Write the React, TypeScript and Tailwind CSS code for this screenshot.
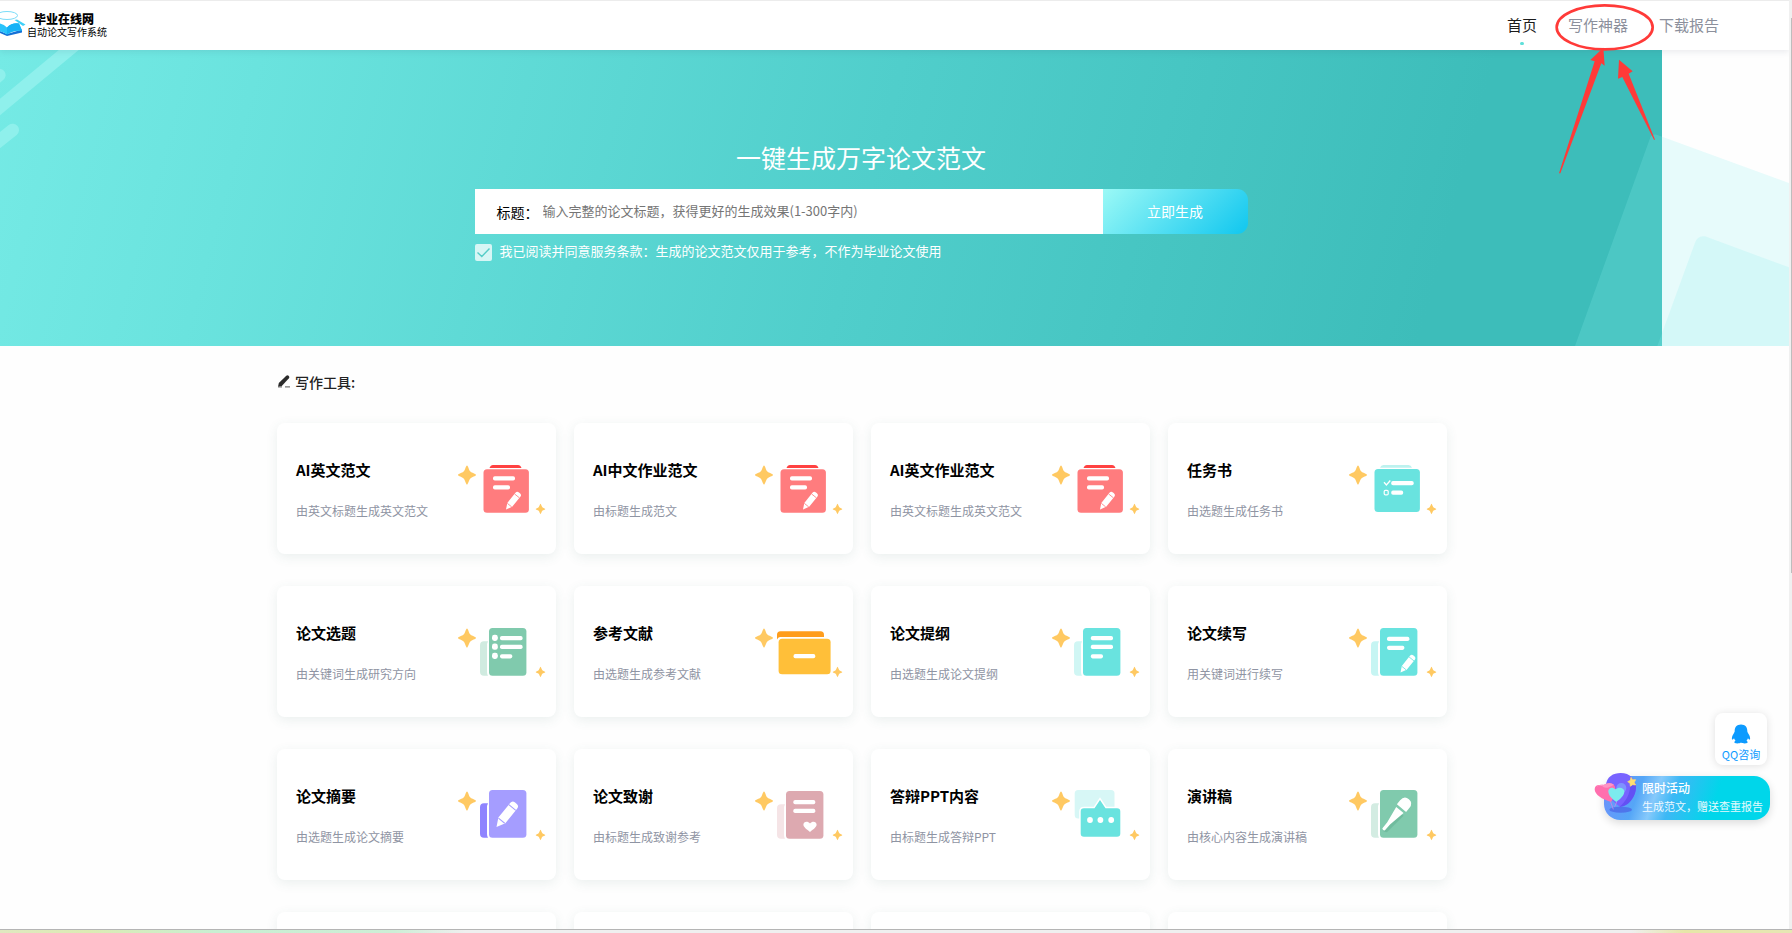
import { ReactNode } from "react";

type Tool = { title: string; desc: string; icon: ReactNode };

const STAR = "M0 -9.5C1 -9.5 2 -4.6 3.4 -3.4C4.6 -2.2 9 -1 9 0C9 1 4.6 2.2 3.4 3.4C2 4.6 1 9.5 0 9.5C-1 9.5 -2 4.6 -3.4 3.4C-4.6 2.2 -9 1 -9 0C-9 -1 -4.6 -2.2 -3.4 -3.4C-2 -4.6 -1 -9.5 0 -9.5Z";

function IconFrame({ children }: { children: ReactNode }) {
  return (
    <svg viewBox="0 0 90 56" className="mt-[3px] h-14 w-[90px] shrink-0" aria-hidden="true">
      <path d={STAR} transform="translate(11 12)" fill="#ffc962" />
      <path d={STAR} transform="translate(84.5 46) scale(.54)" fill="#ffc962" />
      {children}
    </svg>
  );
}

function Bar({ x, y, w }: { x: number; y: number; w: number }) {
  return <rect x={x} y={y} width={w} height="4.2" rx="1.8" fill="#fff" />;
}

// points down-left, tip at 0,0
function Pencil({ x, y, s = 1, cut }: { x: number; y: number; s?: number; cut: string }) {
  return (
    <g transform={`translate(${x} ${y}) rotate(39) scale(${s})`}>
      <path d="M0 0L-2.9 -5.5V-17.5Q-2.9 -19.8 -0.6 -19.8H0.6Q2.9 -19.8 2.9 -17.5V-5.5Z" fill="#fff" />
      <path d="M-2.9 -16.2H2.9M-2.6 -5.2H2.6" stroke={cut} strokeWidth=".7" />
    </g>
  );
}

function Book({ front, back, y = 2, children }: { front: string; back: string; y?: number; children: ReactNode }) {
  return (
    <>
      <path
        d={`M32 ${y + 13.3}H28Q24 ${y + 13.3} 24 ${y + 17.3}V${y + 43.7}Q24 ${y + 47.7} 28 ${y + 47.7}H32Q31 ${y + 46} 31 ${y + 44}V${y + 16}Z`}
        fill={back}
      />
      <rect x="33" y={y} width="37.4" height="47.7" rx="3.5" fill={front} />
      {children}
    </>
  );
}

function RedNote() {
  return (
    <IconFrame>
      <path d="M33.5 5Q34.5 2 37 2H62Q64.5 2 65.5 5Z" fill="#ff4141" />
      <rect x="27.5" y="6.3" width="45.4" height="43.4" rx="3.5" fill="#ff7c7e" />
      <Bar x={37} y={13.3} w={22} />
      <Bar x={37} y={22.3} w={17} />
      <Pencil x={50} y={46.5} s={1.08} cut="#ff7c7e" />
    </IconFrame>
  );
}

function TaskNote() {
  return (
    <IconFrame>
      <path d="M33 4.8Q34 2 36.5 2H61.5Q64 2 65 4.8Z" fill="#bdf2ef" />
      <rect x="27.5" y="6" width="45.4" height="43" rx="3.5" fill="#69e3df" />
      <path d="M37 19.3L39.4 22L43.3 17.5" fill="none" stroke="#fff" strokeWidth="1.3" />
      <rect x="37.2" y="27.3" width="4" height="4.6" rx="1.2" fill="none" stroke="#fff" strokeWidth="1.2" />
      <Bar x={44.2} y={18} w={22.5} />
      <Bar x={44.2} y={27.6} w={12} />
    </IconFrame>
  );
}

const tools: Tool[] = [
  { title: "AI英文范文", desc: "由英文标题生成英文范文", icon: <RedNote /> },
  { title: "AI中文作业范文", desc: "由标题生成范文", icon: <RedNote /> },
  { title: "AI英文作业范文", desc: "由英文标题生成英文范文", icon: <RedNote /> },
  { title: "任务书", desc: "由选题生成任务书", icon: <TaskNote /> },
  {
    title: "论文选题",
    desc: "由关键词生成研究方向",
    icon: (
      <IconFrame>
        <Book front="#80caad" back="#d0ebe0">
          {[8.8, 17.6, 26.8].map((y) => (
            <rect key={y} x="36" y={y} width="5.8" height="6.2" rx="2.4" fill="#fff" />
          ))}
          <Bar x={44} y={10} w={22.6} />
          <Bar x={44} y={18.8} w={22.6} />
          <Bar x={44} y={28.2} w={12.3} />
        </Book>
      </IconFrame>
    ),
  },
  {
    title: "参考文献",
    desc: "由选题生成参考文献",
    icon: (
      <IconFrame>
        <path d="M24 13.5V9Q24 5.3 27.5 5.3H67.5Q71 5.3 71 9V11H27Q25 11 24 13.5Z" fill="#ff9d1c" />
        <rect x="25.6" y="12.7" width="52" height="35.6" rx="3.5" fill="#ffbf39" />
        <Bar x={40.5} y={28.1} w={21.8} />
      </IconFrame>
    ),
  },
  {
    title: "论文提纲",
    desc: "由选题生成论文提纲",
    icon: (
      <IconFrame>
        <Book front="#69e3df" back="#d0f6f4">
          <Bar x={40.8} y={10} w={22.2} />
          <Bar x={40.8} y={18.8} w={22.2} />
          <Bar x={40.8} y={28.2} w={12.2} />
        </Book>
      </IconFrame>
    ),
  },
  {
    title: "论文续写",
    desc: "用关键词进行续写",
    icon: (
      <IconFrame>
        <Book front="#69e3df" back="#c6f5f3">
          <Bar x={40} y={10.8} w={22.4} />
          <Bar x={40} y={19.7} w={17.4} />
          <Pencil x={53.5} y={46.5} s={1.08} cut="#69e3df" />
        </Book>
      </IconFrame>
    ),
  },
  {
    title: "论文摘要",
    desc: "由选题生成论文摘要",
    icon: (
      <IconFrame>
        <Book front="#a59dff" back="#8f84ff" y={1}>
          <Pencil x={40.5} y={38} s={1.55} cut="#a59dff" />
        </Book>
      </IconFrame>
    ),
  },
  {
    title: "论文致谢",
    desc: "由标题生成致谢参考",
    icon: (
      <IconFrame>
        <Book front="#dda9b0" back="#f5e4e6">
          <Bar x={40.3} y={11} w={22} />
          <Bar x={40.3} y={19.8} w={22} />
          <path d="M57 43C53 40 50.4 38 50.4 35.6C50.4 32.4 54.8 31.4 57 34.6C59.2 31.4 63.6 32.4 63.6 35.6C63.6 38 61 40 57 43Z" fill="#fff" />
        </Book>
      </IconFrame>
    ),
  },
  {
    title: "答辩PPT内容",
    desc: "由标题生成答辩PPT",
    icon: (
      <IconFrame>
        <rect x="24.7" y="1" width="39.8" height="28.4" rx="3.5" fill="#d7f7f6" />
        <path
          d="M34 19.3H44.5L50 11L55.5 19.3H67Q70.3 19.3 70.3 22.6V44.4Q70.3 47.7 67 47.7H34Q30.7 47.7 30.7 44.4V22.6Q30.7 19.3 34 19.3Z"
          fill="#69e3df"
          stroke="#fff"
          strokeWidth="3"
          paintOrder="stroke"
        />
        {[40, 50.4, 61.2].map((cx) => (
          <circle key={cx} cx={cx} cy="31" r="2.9" fill="#fff" />
        ))}
      </IconFrame>
    ),
  },
  {
    title: "演讲稿",
    desc: "由核心内容生成演讲稿",
    icon: (
      <IconFrame>
        <Book front="#80caad" back="#d3ece2" y={1}>
          <g transform="translate(36.5 40.5) rotate(40)">
            <path d="M1.2 1.5L-3 -23.5H6.5L4.4 0Z" fill="#5fae90" opacity=".5" />
            <path d="M-1.6 0L-1.8 -8L-4.8 -25.5H4.8L1.8 -8L1.6 0Q0 1.2 -1.6 0Z" fill="#fff" />
            <path d="M-6 -28H6V-33Q6 -39.5 0 -39.5Q-6 -39.5 -6 -33Z" fill="#fff" />
          </g>
        </Book>
      </IconFrame>
    ),
  },
];

function ToolCard({ tool }: { tool: Tool }) {
  return (
    <a
      href="#"
      className="flex items-start justify-between rounded-lg bg-white pt-[37px] pr-[10px] pb-[33px] pl-[19px] shadow-[0_3px_12px_rgba(60,110,100,0.1)]"
    >
      <div className="whitespace-nowrap">
        <h3 className="text-[15px] leading-5 font-bold text-black">{tool.title}</h3>
        <p className="mt-[21px] text-xs leading-5 text-[#8f94a3]">{tool.desc}</p>
      </div>
      {tool.icon}
    </a>
  );
}

function Header() {
  return (
    <header className="relative z-10 flex h-[50px] items-center justify-between border-t border-[#ececec] bg-white pr-[70px] pb-[2px] shadow-[0_2px_6px_rgba(60,70,100,0.1)]">
      <a href="#" className="flex items-center">
        <svg viewBox="0 0 27 28" className="h-7 w-[27px]" aria-hidden="true">
          <path d="M-2 21L7 25L22 21.5V18.5L7 23L-2 19Z" fill="#1471d6" />
          <path d="M-4 12Q3 12 7 16.5Q12 11.5 19 12.5L22 19.5Q13 19 7 23.5Q2 20 -4 19.5Z" fill="#29c3fb" />
          <path d="M7 16.5V23.5Q13 19 22 19.5L19 12.5Q12 11.5 7 16.5Z" fill="#16b2f6" />
          <path d="M14.5 9L17 8.6L25.5 13.5L23 15Z" fill="#3fd0f8" />
          <ellipse cx="7" cy="4.5" rx="10.5" ry="4" fill="#fff" stroke="#7bdcf8" />
        </svg>
        <div className="flex flex-col whitespace-nowrap text-black">
          <span className="pl-[7px] text-xs leading-[14px] font-black">毕业在线网</span>
          <span className="text-[10px] leading-3">自动论文写作系统</span>
        </div>
      </a>
      <nav className="flex gap-[31px] text-[15px] leading-5 text-[#8c909c]">
        <a href="#" className="relative text-[#1c1c1c]">
          首页
          <span className="absolute top-[27px] left-1/2 h-[3px] w-1 -translate-x-1/2 rounded-full bg-[#5fe0da]" />
        </a>
        <a href="#">写作神器</a>
        <a href="#">下载报告</a>
      </nav>
    </header>
  );
}

function Hero() {
  return (
    <section className="relative pt-[87px] pr-[67px] pb-[85px]">
      <div className="absolute inset-y-0 right-[127px] left-0 bg-[linear-gradient(105deg,#75eae5_0%,#6ae3de_15%,#50cecb_52%,#3dbdba_86%)]" />
      <svg viewBox="0 150 240 300" className="absolute top-0 left-0 h-[100px] w-20" aria-hidden="true">
        <g fill="none" stroke="#8ff0ec">
          <path d="M-40 354L240 122" strokeWidth="38" />
          <path d="M-40 453L38 390" strokeWidth="38" strokeLinecap="round" />
          <path d="M-40 257L-2 225" strokeWidth="38" strokeLinecap="round" />
        </g>
      </svg>
      <svg viewBox="270 390 657 648" className="absolute right-0 bottom-0 h-[216px] w-[219px]" aria-hidden="true">
        <path d="M285 1038L510 415Q514 402 530 404L927 549V1038Z" fill="#8cf0f0" fillOpacity=".2" />
        <path d="M532 1038L645 728Q653 705 675 709L927 802V1038Z" fill="#8cf0f0" fillOpacity=".2" />
      </svg>
      <div className="relative mx-auto max-w-[773px]">
        <h1 className="text-center text-[25px] leading-10 text-white">一键生成万字论文范文</h1>
        <form className="mt-3" onSubmit={(e) => e.preventDefault()}>
          <div className="flex h-[45px]">
            <div className="flex flex-1 items-center bg-white pl-[22px] text-sm">
              <label htmlFor="title" className="text-black">
                标题：
              </label>
              <input
                id="title"
                type="text"
                placeholder="输入完整的论文标题，获得更好的生成效果(1-300字内)"
                className="ml-1 flex-1 text-[13px] outline-none placeholder:text-[#757575]"
              />
            </div>
            <button
              type="submit"
              className="w-[145px] rounded-r-[11px] bg-[linear-gradient(135deg,#9bf9f6_0%,#17c9ef_95%)] pb-[2px] text-sm text-white"
            >
              立即生成
            </button>
          </div>
          <label className="mt-2 flex items-start text-[13px] leading-[18px] text-white">
            <span className="mt-px mr-[7px] grid size-[18px] place-items-center">
              <input
                type="checkbox"
                defaultChecked
                className="col-start-1 row-start-1 size-[17px] appearance-none rounded-xs bg-white/75"
              />
              <svg viewBox="0 0 17 17" className="pointer-events-none col-start-1 row-start-1 size-[17px]" aria-hidden="true">
                <path d="M2.5 8.5L6.8 12.5L14.5 4.5" fill="none" stroke="#56cdc8" strokeWidth="1.4" />
              </svg>
            </span>
            我已阅读并同意服务条款：生成的论文范文仅用于参考，不作为毕业论文使用
          </label>
        </form>
      </div>
    </section>
  );
}

function Tools() {
  return (
    <section className="pt-[26px] pr-[65px]">
      <div className="mx-auto max-w-[1170px]">
        <h2 className="flex items-center gap-1 text-sm leading-5 font-medium text-[#222]">
          <svg viewBox="0 0 14 14" className="size-[14px]" aria-hidden="true">
            <path d="M1 12L1.8 8.1L9.3 .7Q10.4 -.2 11.6 .8Q12.8 2 11.9 3.2L4.8 10.9Z" fill="#2b2b2b" />
            <path d="M1 11.9H5M8 11.9H13" stroke="#777" strokeWidth="1.1" />
          </svg>
          写作工具:
        </h2>
        <div className="mt-[31px] grid grid-cols-4 gap-x-[18px] gap-y-8">
          {tools.map((t) => (
            <ToolCard key={t.title} tool={t} />
          ))}
          {[0, 1, 2, 3].map((n) => (
            <div key={n} className="h-[131px] rounded-lg bg-white shadow-[0_3px_12px_rgba(60,110,100,0.1)]" />
          ))}
        </div>
      </div>
    </section>
  );
}

function FloatingPanel() {
  return (
    <div className="absolute right-[22px] bottom-[113px] z-20 flex flex-col items-end gap-[11px]">
      <a
        href="#"
        className="mr-[3px] flex size-[52px] flex-col items-center rounded-lg bg-white pt-[11px] text-[11px] leading-5 text-[#0d9bff] shadow-[0_1px_8px_rgba(0,0,0,0.12)]"
      >
        <svg viewBox="0 0 20 20" className="size-5 shrink-0" aria-hidden="true">
          <path
            d="M10 .5C5.8 .5 3.6 3.3 3.7 7C3.7 8 3.2 8.6 2.6 9.8C1.2 12 .6 14 1 15.4C1.5 16 2.4 15 3 14.2C3.3 15.2 3.8 16 4.5 16.7C3.3 17.2 3.2 18.2 3.7 19C5.5 19.8 8.5 19.6 10 18.6C11.5 19.6 14.5 19.8 16.3 19C16.8 18.2 16.7 17.2 15.5 16.7C16.2 16 16.7 15.2 17 14.2C17.6 15 18.5 16 19 15.4C19.4 14 18.8 12 17.4 9.8C16.8 8.6 16.3 8 16.3 7C16.4 3.3 14.2 .5 10 .5Z"
            fill="#0d9bff"
          />
        </svg>
        QQ咨询
      </a>
      <a
        href="#"
        className="relative rounded-2xl bg-[linear-gradient(110deg,#6f8ffb_0%,#55a6f7_22%,#86c9fb_32%,#3db8f5_42%,#00d6ea_66%)] pt-[3px] pr-[7px] pb-1 pl-9 whitespace-nowrap text-white shadow-[0_3px_8px_rgba(0,0,0,0.14)]"
      >
        <svg viewBox="0 0 132 126" className="absolute -top-1 -left-[10px] h-[42px] w-11" aria-hidden="true">
          <ellipse cx="80" cy="113" rx="34" ry="9" fill="#4a62e6" opacity=".7" />
          <path d="M78 104C50 86 34 62 36 40C38 14 58 3 80 3C108 3 126 22 126 46C126 72 104 102 78 104Z" fill="#7863ff" />
          <path d="M124 32C134 68 102 108 76 104C96 90 110 62 108 38Z" fill="#6351f4" />
          <circle cx="82" cy="48" r="15" fill="#7f92ff" />
          <path d="M51 90C24 82 2 68 2 52C2 38 16 36 26 42C32 34 54 28 62 42C68 56 60 76 51 90Z" fill="#ff6fae" />
          <path d="M8 46Q18 36 28 45Q38 52 60 38Q48 28 30 38Q14 36 8 46Z" fill="#ff93c4" />
          <path d="M50 90L58 112M68 90L62 104" stroke="#c787e8" strokeWidth="2.5" fill="none" />
          <path d="M67 90C50 78 42 66 43 56C45 46 57 44 64 52C74 44 90 46 91 58C92 70 78 82 67 90Z" fill="#7cebee" />
          <path d="M111 16L116 23L125 23L121 31L125 39L116 38L109 43L108 34L101 29L109 25Z" fill="#ffe070" stroke="#ffe070" strokeWidth="2" strokeLinejoin="round" />
        </svg>
        <span className="block pl-[2px] text-xs leading-[18px] font-medium">限时活动</span>
        <span className="block pl-[2px] text-[11px] leading-[19px] text-white/90">生成范文，赠送查重报告</span>
      </a>
    </div>
  );
}

function Markup() {
  return (
    <svg viewBox="0 0 936 1080" className="pointer-events-none absolute top-0 right-0 z-30 h-[360px] w-[312px]" aria-hidden="true">
      <ellipse cx="374" cy="82" rx="144" ry="66" fill="none" stroke="#ff3a38" strokeWidth="8" />
      <path d="M370 143L331 180L344 184L237 520H241L364 190L374 197Z" fill="#ff3a38" />
      <path d="M417 179L458 214L446 221L525 419H522L427 231L414 236Z" fill="#ff3a38" />
    </svg>
  );
}

export default function App() {
  return (
    <div className="relative flex h-screen flex-col overflow-hidden bg-[#fefefe] font-['Noto_Sans_CJK_SC','Noto_Sans',sans-serif]">
      <div className="flex min-h-0 flex-1">
        <main className="min-w-0 flex-1 overflow-hidden">
          <Header />
          <Hero />
          <Tools />
        </main>
        <div className="w-[3px] bg-[#f0f0f0] pt-[18px]">
          <div className="ml-auto h-[555px] w-px bg-[#bdbdbd]" />
        </div>
      </div>
      <div className="h-1 shrink-0 border-t border-[#b5b5b5] bg-[linear-gradient(90deg,#e0e8c0_0%,#dcebb4_5%,#c8efd2_12%,#cdeed6_22%,#efefef_26%,#efefef_91%,#e6e6a8_94%,#e6e6b4_100%)]" />
      <FloatingPanel />
      <Markup />
    </div>
  );
}
